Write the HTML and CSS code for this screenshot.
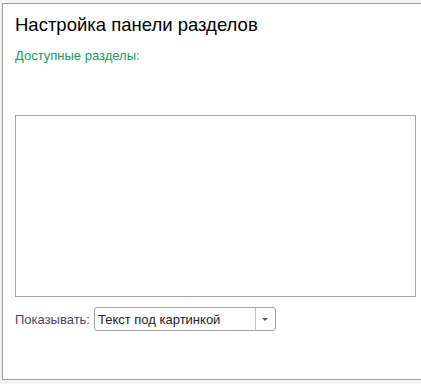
FILE: index.html
```html
<!DOCTYPE html>
<html lang="ru">
  <head>
    <meta charset="UTF-8">
    <title>Настройка панели разделов</title>
    <link rel="stylesheet" href="styles.css">
  </head>
  <body>
    <div class="window">
      <h1 class="title">Настройка панели разделов</h1>
      <div class="group-title">Доступные разделы:</div>
      <div class="sections-list"></div>
      <div class="show-row">
        <span class="show-label">Показывать:</span>
        <div class="combo">
          <span class="combo-text">Текст под картинкой</span>
          <span class="combo-button"><span class="combo-arrow"></span></span>
        </div>
      </div>
    </div>
  </body>
</html>
```

FILE: styles.css
```css
body {
  margin: 0;
  background: #f4f4f4;
  font-family: Arial, "Liberation Sans", sans-serif;
}
.window {
  margin: 3px 0 0 2px;
  height: 377px;
  box-sizing: border-box;
  border-left: 1px solid #a3a3a3;
  border-top: 1px solid #a3a3a3;
  border-bottom: 1px solid #a3a3a3;
  background: #fff;
  box-shadow: 0 2px 3px rgba(0, 0, 0, 0.08);
  padding: 0 0 0 12px;
  display: flex;
  flex-direction: column;
}
.title {
  margin: 10px 0 0;
  font-size: 18.5px;
  font-weight: normal;
  line-height: 22px;
  color: #000;
}
.group-title {
  margin-top: 12px;
  font-size: 13px;
  line-height: 15px;
  color: #1a9e5c;
}
.sections-list {
  margin-top: 52px;
  width: 401px;
  height: 182px;
  box-sizing: border-box;
  border: 1px solid #a3a3a3;
}
.show-row {
  margin-top: 10px;
  display: flex;
  align-items: center;
  gap: 4px;
}
.show-label {
  font-size: 13px;
  color: #4c4470;
}
.combo {
  width: 182px;
  height: 24px;
  box-sizing: border-box;
  border: 1px solid #a3a3a3;
  border-radius: 3px;
  display: flex;
  align-items: center;
}
.combo-text {
  flex: 1;
  padding-left: 3px;
  font-size: 13px;
  color: #222;
}
.combo-button {
  width: 19px;
  height: 100%;
  border-left: 1px solid #c4c4c4;
  display: flex;
  align-items: center;
  justify-content: center;
}
.combo-arrow {
  width: 0;
  height: 0;
  border-left: 3px solid transparent;
  border-right: 3px solid transparent;
  border-top: 3px solid #555;
}
```
